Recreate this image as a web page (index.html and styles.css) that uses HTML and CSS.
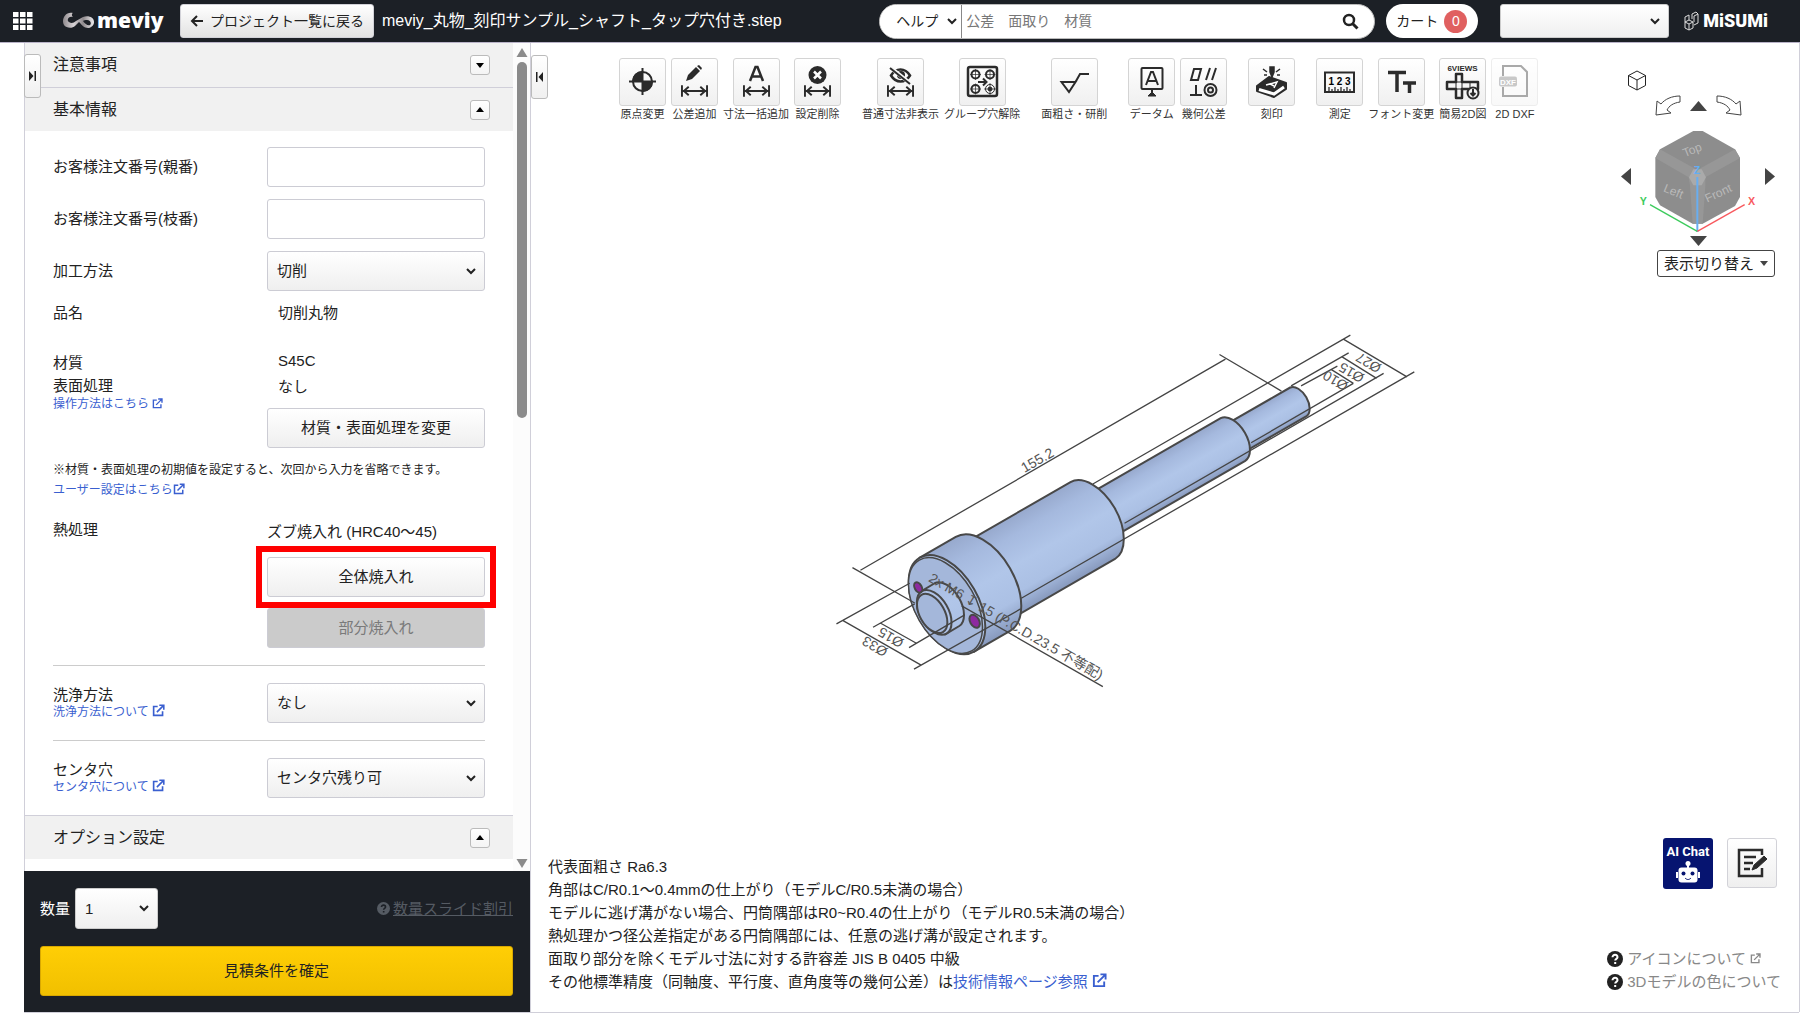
FILE: index.html
```html
<!DOCTYPE html>
<html lang="ja">
<head>
<meta charset="utf-8">
<title>meviy</title>
<link rel="stylesheet" href="styles.css">
</head>
<body>
<svg class="defs" aria-hidden="true">
  <linearGradient id="metal"><stop offset="0" stop-color="#8f8a8d"/><stop offset=".35" stop-color="#d8d3d6"/><stop offset=".65" stop-color="#8f8a8d"/><stop offset="1" stop-color="#f0eef0"/></linearGradient>
  <symbol id="ext" viewBox="0 0 16 16"><path d="M7 3H2v11h11V9M6 10l8-8M9 1.500h5.500V7" fill="none" stroke="currentColor" stroke-width="2"/></symbol>
  <symbol id="help" viewBox="0 0 16 16"><circle cx="8" cy="8" r="8" fill="currentColor"/><path d="M5.500 6.300c0-3.300 5-3.200 5 0 0 1.600-2.300 1.600-2.300 3.200M8.200 11v2" fill="none" stroke="var(--mark)" stroke-width="2"/></symbol>
  <symbol id="span" viewBox="0 0 28 12"><path d="M1 0v12M27 0v12M2 6h24M8 1.500 3 6l5 4.500M20 1.500 25 6l-5 4.500" fill="none" stroke="currentColor" stroke-width="2"/></symbol>
</svg>

<header class="topbar">
  <button class="apps" aria-label="メニュー"><svg width="20" height="18" viewBox="0 0 20 18"><path d="M0 0h5.500v5H0zM7 0h5.500v5H7zM14 0h5.500v5H14zM0 6.500h5.500v5H0zM7 6.500h5.500v5H7zM14 6.500h5.500v5H14zM0 13h5.500v5H0zM7 13h5.500v5H7zM14 13h5.500v5H14z" fill="#fff"/></svg></button>
  <a class="brand" href="#">
    <svg width="33" height="18" viewBox="0 0 33 18"><path fill="url(#metal)" fill-rule="evenodd" d="M11 1c-2 1-1 3 0 4-4-1-6 2-5 4s5 3 8 0l7-4c5-2 11 0 11 5 0 4-4 6-6 6-4 0-6-3-9-6l-4 4c-3 3-9 2-11-1C-1 8 3-1 11 1zM21 9c2 3 5 5 7 4 2-2 0-5-3-5-2 0-3 0-4 1z"/></svg>
    <span>meviy</span>
  </a>
  <button class="btn back"><svg width="13" height="12" viewBox="0 0 13 12"><path d="M13 6H2M7 1 2 6l5 5" fill="none" stroke="#222" stroke-width="2"/></svg>プロジェクト一覧に戻る</button>
  <h1 class="filename">meviy_丸物_刻印サンプル_シャフト_タップ穴付き.step</h1>
  <form class="search">
    <select class="help-select" aria-label="検索対象"><option>ヘルプ</option></select>
    <input type="text" aria-label="検索" placeholder="公差　面取り　材質">
    <button type="button" aria-label="検索する"><svg width="17" height="17" viewBox="0 0 17 17"><circle cx="7" cy="7" r="5" fill="none" stroke="#222" stroke-width="2.500"/><path d="m10.500 10.500 5 5" stroke="#222" stroke-width="3"/></svg></button>
  </form>
  <button class="cart">カート<span class="badge">0</span></button>
  <select class="account" aria-label="アカウント"><option></option></select>
  <a class="misumi" href="#"><svg width="15" height="20" viewBox="0 0 15 20" fill="none" stroke="#ddd"><path d="M1 6 5 4v5l-4 2zM5 9l4 2v6l-4 2-4-2v-6M5 13v6M5 13l4-2M5 13l-4-2M8 3l4-2 2 2v9l-4 2M10 5v6M10 5l4-2M8 3v5"/></svg><span>MiSUMi</span></a>
</header>

<div class="workspace">
  <aside class="side">
    <button class="collapse" aria-label="パネルを広げる"><svg width="7" height="12" viewBox="0 0 7 12"><path d="M0 1v10l4.500-5zM5.500 1H7v10H5.500z" fill="#222"/></svg></button>
    <div class="scroller">
      <div class="scroll-content">
        <section class="section-head"><h2>注意事項</h2><button class="toggle" aria-label="開く"><svg width="8" height="5" viewBox="0 0 8 5"><path d="M0 0h8L4 5z"/></svg></button></section>
        <section class="section-head ruled"><h2>基本情報</h2><button class="toggle" aria-label="閉じる"><svg width="8" height="5" viewBox="0 0 8 5"><path d="M0 5h8L4 0z"/></svg></button></section>
        <div class="fields">
          <div class="row"><label for="order-main">お客様注文番号(親番)</label><input id="order-main" class="control" type="text"></div>
          <div class="row"><label for="order-sub">お客様注文番号(枝番)</label><input id="order-sub" class="control" type="text"></div>
          <div class="row"><label for="method">加工方法</label><select id="method" class="control"><option>切削</option></select></div>
          <div class="row name-row"><span>品名</span><span class="value">切削丸物</span></div>
          <div class="row top">
            <div class="stack material"><span>材質</span><span>表面処理</span><a href="#">操作方法はこちら <svg width="11" height="11"><use href="#ext"/></svg></a></div>
            <div class="stack values"><span class="value">S45C</span><span class="value">なし</span><button class="btn control">材質・表面処理を変更</button></div>
          </div>
          <p class="note">※材質・表面処理の初期値を設定すると、次回から入力を省略できます。<br><a href="#">ユーザー設定はこちら<svg width="12" height="12"><use href="#ext"/></svg></a></p>
          <div class="row top">
            <span>熱処理</span>
            <div class="stack heat"><span>ズブ焼入れ (HRC40～45)</span><div class="marked"><button class="btn control">全体焼入れ</button></div><button class="control" disabled>部分焼入れ</button></div>
          </div>
          <hr>
          <div class="row"><div class="stack pair"><label for="wash">洗浄方法</label><a href="#">洗浄方法について <svg width="13" height="13"><use href="#ext"/></svg></a></div><select id="wash" class="control"><option>なし</option></select></div>
          <hr>
          <div class="row"><div class="stack pair"><label for="center">センタ穴</label><a href="#">センタ穴について <svg width="13" height="13"><use href="#ext"/></svg></a></div><select id="center" class="control"><option>センタ穴残り可</option></select></div>
        </div>
        <section class="section-head ruled"><h2>オプション設定</h2><button class="toggle" aria-label="閉じる"><svg width="8" height="5" viewBox="0 0 8 5"><path d="M0 5h8L4 0z"/></svg></button></section>
      </div>
      <div class="scrollbar" aria-hidden="true">
        <svg width="12" height="9" viewBox="0 0 12 9"><path d="M6 0l5.500 9H.5z" fill="#8b8b8b"/></svg>
        <div class="track"><div class="thumb"></div></div>
        <svg width="12" height="9" viewBox="0 0 12 9"><path d="M6 9l5.500-9H.5z" fill="#8b8b8b"/></svg>
      </div>
    </div>
    <footer class="order">
      <div class="qty"><label for="qty">数量</label><select id="qty"><option>1</option></select><a class="slide" href="#"><svg width="13" height="13"><use href="#help"/></svg><span>数量スライド割引</span></a></div>
      <button class="confirm">見積条件を確定</button>
    </footer>
  </aside>

  <main class="viewer">
    <svg class="model" viewBox="531 43 1269 969" preserveAspectRatio="xMidYMid meet" role="img" aria-label="シャフト">
      <defs>
        <linearGradient id="shade"><stop offset="0" stop-color="#97a9cd"/><stop offset=".2" stop-color="#a5b9de"/><stop offset=".5" stop-color="#b1c6e9"/><stop offset=".78" stop-color="#abc0e4"/><stop offset="1" stop-color="#8799bd"/></linearGradient>
        <linearGradient id="g33" href="#shade" gradientUnits="userSpaceOnUse" x1="920" y1="557.700" x2="974.500" y2="651.700"/>
        <linearGradient id="g27" href="#shade" gradientUnits="userSpaceOnUse" x1="961" y1="545.400" x2="1005.600" y2="622.400"/>
        <linearGradient id="g15" href="#shade" gradientUnits="userSpaceOnUse" x1="1080.700" y1="499.100" x2="1105.300" y2="541.900"/>
        <linearGradient id="g10" href="#shade" gradientUnits="userSpaceOnUse" x1="1225.300" y1="425.100" x2="1241.700" y2="453.700"/>
      </defs>
      <g stroke="#484848" stroke-width="2">
        <path fill="url(#g10)" d="M1225.300 425.100 1290.800 387.400A16.500 9.500 60 0 1 1307.200 416L1241.700 453.700z"/>
        <path fill="url(#g15)" d="M1080.700 499.100 1221.200 418A24.700 14.300 60 0 1 1245.800 460.800L1105.300 541.900z"/>
        <path fill="url(#g27)" d="M961 545.400 1070.900 482A44.500 25.700 60 0 1 1115.500 559L1005.600 622.400z"/>
        <path fill="url(#g33)" d="M920.100 557.700 956.100 536.900A54.300 31.300 60 0 1 1010.500 630.900L974.500 651.700z"/>
        <ellipse cx="947.300" cy="604.700" rx="54.300" ry="31.300" transform="rotate(60 947.300 604.700)" fill="#b0c4e8"/>
        <ellipse cx="945.800" cy="605.600" rx="52.500" ry="30.200" transform="rotate(60 945.800 605.600)" fill="#a4b7da" stroke-width="1.500"/>
        <path fill="url(#g33)" d="M921 591.600 935 583.300A24.700 14.300 60 0 1 959.600 626.100L945.600 634.400z"/>
        <ellipse cx="934.500" cy="612.500" rx="24.500" ry="14.200" transform="rotate(60 934.500 612.500)" fill="#b0c4e8"/>
        <ellipse cx="932.500" cy="613.500" rx="21.500" ry="12.400" transform="rotate(60 932.500 613.500)" fill="#a4b7da"/>
        <ellipse cx="918.500" cy="587.500" rx="5.500" ry="3.500" transform="rotate(60 918.500 587.500)" fill="#8d2aa0"/>
        <ellipse cx="975" cy="621.300" rx="7" ry="4.500" transform="rotate(60 975 621.300)" fill="#8d2aa0"/>
      </g>
      <path fill="none" stroke="#444" stroke-width="1.300" d="M860.700 570.300 1226 359M852.700 567.700 915 603M1220 354.300 1282 391M843.300 620.700 921 665M836.700 624 910 583.300M914.300 669.300 1021 609M881 623.300 916.700 643.300M873.300 627.300 915 604M909.300 647.700 965 615M1344 339 1407.700 376.700M1351 335 1093.300 484M1415 371.700 1021.700 598.300M1342.700 356.700 1377.300 378.300M1349.300 352.700 1291.700 385.700M1384.300 373.300 1125 523.300M1331.700 369.300 1354 383.300M1338 366 1301.700 385.700M1354 383.300 1251.700 442.700M962 606 1103.300 686.700"/>
      <g class="dims">
        <text transform="translate(1025 473) rotate(-30)">155.2</text>
        <text transform="translate(928 581) rotate(30)">2x M6 ↧ 15 (P.C.D.23.5 不等配)</text>
        <text transform="translate(889 649) rotate(210)">Ø33</text>
        <text transform="translate(905 640) rotate(210)">Ø15</text>
        <text transform="translate(1383 365) rotate(210)">Ø27</text>
        <text transform="translate(1366 375) rotate(210)">Ø15</text>
        <text transform="translate(1350 383) rotate(210)">Ø10</text>
      </g>
    </svg>

    <button class="collapse" aria-label="パネルを閉じる"><svg width="7" height="12" viewBox="0 0 7 12"><path d="M7 1v10L2.500 6zM0 1h1.500v10H0z" fill="#222"/></svg></button>

    <nav class="toolbar">
      <div class="group">
        <button class="tool"><span class="face"><svg viewBox="1 1 45 45"><circle cx="23.500" cy="23.500" r="9.500" fill="none" stroke="#2b2b2b" stroke-width="2"/><path d="M23.500 23.500V13A10.500 10.500 0 0 0 13 23.500zM23.500 23.500V34A10.500 10.500 0 0 0 34 23.500z" fill="#2b2b2b"/><path d="M23.500 10v27M10 23.500h27" stroke="#2b2b2b" stroke-width="2"/></svg></span>原点変更</button>
        <button class="tool"><span class="face"><svg viewBox="1 1 45 45"><path d="m15 23 2-6 8-8 4 4-8 8zM26 8l2-1 3 3-1 2z" fill="#2b2b2b"/><use href="#span" x="10" y="27" width="27" height="12"/></svg></span>公差追加</button>
        <button class="tool"><span class="face"><svg viewBox="1 1 45 45"><path d="m17 23 5.500-14h2L30 23M19 18.500h9" fill="none" stroke="#2b2b2b" stroke-width="2.500"/><use href="#span" x="10" y="27" width="27" height="12"/></svg></span>寸法一括追加</button>
        <button class="tool"><span class="face"><svg viewBox="1 1 45 45"><circle cx="23.500" cy="17" r="9" fill="#2b2b2b"/><path d="m20 13.500 7 7m0-7-7 7" stroke="#fff" stroke-width="2.500"/><use href="#span" x="10" y="27" width="27" height="12"/></svg></span>設定削除</button>
      </div>
      <div class="group">
        <button class="tool"><span class="face"><svg viewBox="1 1 45 45"><path d="M14 17.500c5-8 14-8 19 0-5 8-14 8-19 0z" fill="none" stroke="#2b2b2b" stroke-width="2.500"/><circle cx="24" cy="17" r="4" fill="#2b2b2b"/><path d="m14 10 20 16" stroke="#f7f7f7" stroke-width="4"/><path d="m13 10 20 16" stroke="#2b2b2b" stroke-width="2"/><use href="#span" x="10" y="27" width="27" height="12"/></svg></span>普通寸法非表示</button>
        <button class="tool"><span class="face"><svg viewBox="1 1 45 45" fill="none" stroke="#2b2b2b"><rect x="9" y="9" width="29" height="29" rx="2" stroke-width="2.500"/><g stroke-width="2"><circle cx="16.500" cy="16.500" r="4"/><circle cx="31" cy="16.500" r="4"/><circle cx="16.500" cy="31" r="4"/><circle cx="31" cy="31" r="4.500" stroke-width="1"/><path d="M19 24h8M24 20.500l3.500 3.500-3.500 3.500"/></g><path d="M16.500 11v11M11 16.500h11M31 11v11M25.500 16.500h11M16.500 25.500v11M11 31h11M31 25v12M25 31h12" stroke-width=".7"/><circle cx="31" cy="31" r="2" fill="#2b2b2b"/></svg></span>グループ穴解除</button>
      </div>
      <div class="group">
        <button class="tool"><span class="face"><svg viewBox="1 1 45 45"><path d="M10.500 24h14L18 34zM24.500 24 29 16h9" fill="none" stroke="#2b2b2b" stroke-width="2"/></svg></span>面粗さ・研削</button>
      </div>
      <div class="group">
        <button class="tool"><span class="face"><svg viewBox="1 1 45 45" fill="none" stroke="#2b2b2b" stroke-width="2"><rect x="13.500" y="10" width="21" height="21" rx="1"/><path d="m18 27 5-13h2l5 13M20 23h8M24 31v5"/><path d="m24 34-4 4h8z" fill="#2b2b2b" stroke-width="1"/></svg></span>データム</button>
        <button class="tool"><span class="face"><svg viewBox="1 1 45 45" fill="none" stroke="#2b2b2b" stroke-width="2"><path d="m14 11-3 11h7l3-11zM30 10l-4 12M36 10l-4 12M16 27v10M10 37h12"/><circle cx="30.500" cy="32" r="6"/><circle cx="30.500" cy="32" r="2.500"/></svg></span>幾何公差</button>
      </div>
      <div class="group">
        <button class="tool"><span class="face"><svg viewBox="1 1 45 45"><path d="m9 28 12-9 17 6v6L26 39 9 33z" fill="#2b2b2b" stroke="#2b2b2b" stroke-width="2" stroke-linejoin="round"/><path d="m11 31.500 15 4.500 10-7" fill="none" stroke="#fff" stroke-width="3"/><path d="m18 27 11-3-3 6M22 26l4 2" fill="none" stroke="#fff" stroke-width="1.500"/><path d="M22 9h4v5l-2 5-2-5zM15 11l4 3M16 17h3M32 11l-4 3M32 17h-3" stroke="#2b2b2b" stroke-width="1.500" fill="#2b2b2b"/></svg></span>刻印</button>
      </div>
      <div class="group">
        <button class="tool"><span class="face"><svg viewBox="1 1 45 45"><rect x="9" y="14.500" width="29" height="19.500" fill="none" stroke="#2b2b2b" stroke-width="2"/><path d="M13 34v-5M16 34v-3M19 34v-5M22 34v-3M25 34v-5M28 34v-3M31 34v-5M34 34v-3" stroke="#2b2b2b" stroke-width="1.300"/><text x="23.500" y="26.500" font-size="10" font-weight="700" text-anchor="middle">1 2 3</text></svg></span>測定</button>
        <button class="tool"><span class="face"><svg viewBox="1 1 45 45"><path d="M10 14.500h18M19 14v20M25 25h13M31.500 25v10" fill="none" stroke="#2b2b2b" stroke-width="3.500"/></svg></span>フォント変更</button>
        <button class="tool"><span class="face"><svg viewBox="1 1 45 45" fill="none" stroke="#2b2b2b" stroke-width="2"><text x="23.500" y="13" font-size="8" font-weight="700" text-anchor="middle" stroke="none" fill="#2b2b2b">6VIEWS</text><path d="M17 16h6v8h16v7H23v9h-6v-9H8v-7h9z" stroke-width="2.500" stroke-linejoin="round"/><path d="M17 24h6v7h-6zM31 24v7" stroke-width="1"/><circle cx="34" cy="35" r="5.500" fill="#f5f5f5"/><path d="M34 31v6M31.500 35l2.500 2.500 2.500-2.500"/></svg></span>簡易2D図</button>
        <button class="tool" disabled><span class="face"><svg viewBox="1 1 45 45" fill="none" stroke="#2b2b2b" stroke-width="2"><path d="M12 18V8h18l6 6v24H12v-9"/><rect x="8" y="18.500" width="18" height="10" rx="2" fill="#777" stroke="none"/><text x="17" y="26.500" font-size="8" font-weight="700" text-anchor="middle" stroke="none" fill="#fff">DXF</text></svg></span>2D DXF</button>
      </div>
    </nav>

    <div class="navigator">
      <button class="home" aria-label="ホーム"><svg width="20" height="21" viewBox="0 0 20 21" fill="none" stroke="#222"><path d="m10 1 8.500 4.500v10L10 20l-8.500-4.500v-10zM1.500 5.500 10 10l8.500-4.500M10 10v10"/></svg></button>
      <div class="spin">
        <button aria-label="左回転"><svg width="26" height="21" viewBox="0 0 26 21" fill="none" stroke="#444"><path d="M25 1v6c-7 1-11 4-13 8l4 3-15 2L2 6l4 3c4-5 11-8 19-8z"/></svg></button>
        <button aria-label="上"><svg width="17" height="10" viewBox="0 0 17 10"><path d="M0 10 8.500 0 17 10z" fill="#444"/></svg></button>
        <button aria-label="右回転"><svg width="26" height="21" viewBox="0 0 26 21" fill="none" stroke="#444"><path d="M1 1v6c7 1 11 4 13 8l-4 3 15 2L24 6l-4 3C16 4 9 1 1 1z"/></svg></button>
      </div>
      <div class="turn">
        <button aria-label="左"><svg width="10" height="17" viewBox="0 0 10 17"><path d="M10 0v17L0 8.500z" fill="#444"/></svg></button>
        <svg width="128" height="112" viewBox="162 204 384 336" role="img" aria-label="ビューキューブ">
          <path d="M340 237h28l97 55 15 26v117l-15 27-97 53h-30l-98-55-14-25V318l14-26z" fill="#8d8d8d"/>
          <path d="m240 292 112 62 113-62 15 26-104 58v26l-8 113h-30l-8-113-4-26-100-58z" fill="#979797"/>
          <path d="m340 352h25l13 24-13 24h-25l-13-24z" fill="#aaa"/>
          <g class="cube-text"><text transform="translate(314 316) rotate(-22)">Top</text><text transform="translate(248 418) rotate(22)">Left</text><text transform="translate(382 452) rotate(-25)">Front</text></g>
          <g fill="none" stroke-width="4"><path d="M352 540V375" stroke="#69aef0" stroke-width="6"/><path d="M352 538 210 458" stroke="#3ccb5c"/><path d="m352 538 142-80" stroke="#f8595e"/></g>
          <g class="axis"><text x="341" y="366" fill="#62aef4">Z</text><text x="179" y="458" fill="#3ccb5c">Y</text><text x="504" y="458" fill="#f8595e">X</text></g>
        </svg>
        <button aria-label="右"><svg width="10" height="17" viewBox="0 0 10 17"><path d="M0 0v17l10-8.500z" fill="#444"/></svg></button>
      </div>
      <button class="down" aria-label="下"><svg width="17" height="10" viewBox="0 0 17 10"><path d="M0 0h17L8.500 10z" fill="#444"/></svg></button>
      <button class="display">表示切り替え<svg width="8" height="5" viewBox="0 0 8 5"><path d="M0 0h8L4 5z" fill="#444"/></svg></button>
    </div>

    <div class="bottom">
      <p class="notes">代表面粗さ Ra6.3<br>角部はC/R0.1～0.4mmの仕上がり（モデルC/R0.5未満の場合）<br>モデルに逃げ溝がない場合、円筒隅部はR0~R0.4の仕上がり（モデルR0.5未満の場合）<br>熱処理かつ径公差指定がある円筒隅部には、任意の逃げ溝が設定されます。<br>面取り部分を除くモデル寸法に対する許容差 JIS B 0405 中級<br>その他標準精度（同軸度、平行度、直角度等の幾何公差）は<a href="#">技術情報ページ参照 <svg width="15" height="15"><use href="#ext"/></svg></a></p>
      <div class="support">
        <div class="actions">
          <button class="chat"><span>AI Chat</span><svg width="24" height="23" viewBox="0 0 24 23"><circle cx="12" cy="2.500" r="2.500" fill="#fff"/><path d="M12 4v4M1 11v6M23 11v6" stroke="#fff" stroke-width="2"/><rect x="2.500" y="6.500" width="19" height="15" rx="3" fill="#fff"/><circle cx="7.500" cy="12.500" r="2" fill="#061470"/><circle cx="16.500" cy="12.500" r="2" fill="#061470"/><path d="M9 17c2 2 4 2 6 0" fill="none" stroke="#061470"/></svg></button>
          <button class="btn edit" aria-label="メモ"><svg width="30" height="30" viewBox="0 0 30 30" fill="none" stroke="#2b2b2b" stroke-width="2.500"><path d="M25 7V2H2v26h23v-8M7 9h12M7 15h9M7 21h6"/><path d="m15 22 2-5 10-9 3 3-10 9z" fill="#2b2b2b" stroke-width="1"/></svg></button>
        </div>
        <ul class="links">
          <li><svg width="16" height="16"><use href="#help"/></svg><a href="#">アイコンについて <svg width="11" height="11"><use href="#ext"/></svg></a></li>
          <li><svg width="16" height="16"><use href="#help"/></svg><a href="#">3Dモデルの色について</a></li>
        </ul>
      </div>
    </div>
  </main>
</div>
</body>
</html>
```
FILE: styles.css
```css
:root { --dark: #1c2026; --line: #d0cfd9; --link: #3a5fd0; --mark: #fff; }
* { box-sizing: border-box; }
body { margin: 0; height: 100vh; display: flex; flex-direction: column; background: #fff; color: #222; font: 15px/20px "Liberation Sans", "Noto Sans CJK JP", sans-serif; }
button, select, input { font: inherit; color: inherit; margin: 0; }
button { padding: 0; border: 0; background: none; }
h1, h2, p, ul { margin: 0; padding: 0; font-weight: 400; }
svg { display: block; flex: none; }
a { color: var(--link); text-decoration: none; }
a svg { display: inline-block; vertical-align: -1px; }
.defs { position: absolute; width: 0; height: 0; }
select { appearance: none; background: url("data:image/svg+xml,%3Csvg xmlns='http://www.w3.org/2000/svg' width='10' height='7'%3E%3Cpath d='M1 1l4 4 4-4' fill='none' stroke='%23222' stroke-width='2'/%3E%3C/svg%3E") no-repeat right 8px center, linear-gradient(#fff, #efefef); }
.btn { border: 1px solid #d2d2d8; border-radius: 3px; background: linear-gradient(#fff, #efefef); }

.topbar { flex: none; height: 43px; display: flex; align-items: center; padding: 0 32px 0 13px; background: var(--dark); border-bottom: 1px solid #b9b3c8; color: #fff; }
.brand { display: flex; align-items: center; gap: 2px; margin-left: 29px; width: 118px; color: #fff; font: 800 21px/30px "Open Sans", sans-serif; }
.brand span { padding-bottom: 3px; }
.back { display: flex; align-items: center; gap: 7px; height: 34px; padding: 0 9px; color: #222; font-size: 14px; background: linear-gradient(#fff, #e2e2e2); }
.filename { margin-left: 8px; font-size: 16px; white-space: nowrap; flex: 1; }
.search { display: flex; align-items: center; width: 496px; height: 35px; border-radius: 18px; background: #fff; border: 1px solid #bbb; color: #222; font-size: 14px; overflow: hidden; }
.help-select { align-self: stretch; width: 82px; padding: 0 0 0 16px; border: 0; border-right: 1px solid #888; background-color: #fff; background-position: right 4px center, 0 0; background-size: auto, 0 0; }
.search input { flex: 1; min-width: 0; border: 0; padding: 0 4px; background: none; }
.search input::placeholder { color: #777; opacity: 1; }
.search button { padding-right: 15px; }
.cart { display: flex; align-items: center; gap: 6px; width: 92px; height: 34px; margin-left: 11px; padding-left: 10px; border-radius: 17px; background: #fff; color: #222; font-size: 14px; white-space: nowrap; }
.badge { width: 23px; height: 23px; border-radius: 50%; background: #e06060; color: #fff; line-height: 23px; }
.account { width: 169px; height: 34px; margin-left: 22px; border: 1px solid #ccc; border-radius: 3px; background-color: #eee; }
.misumi { display: flex; align-items: center; gap: 4px; margin-left: 15px; color: #fff; font: 900 18px/20px Roboto, sans-serif; }

.workspace { flex: 1; min-height: 0; display: flex; margin: 0 1px 1px 24px; box-shadow: 0 1px var(--line), 1px 0 var(--line); }
.side { position: relative; flex: none; width: 507px; display: flex; flex-direction: column; border-right: 1px solid var(--line); border-left: 1px solid var(--line); }
.collapse { position: absolute; left: 0; top: 11px; width: 17px; height: 44px; border: 1px solid #bbb; border-radius: 3px; background: linear-gradient(#fff, #f0f0f0); display: grid; place-items: center; z-index: 1; }
.side .collapse { left: -1px; }
.scroller { flex: 1; min-height: 0; display: flex; }
.scroll-content { flex: 1; overflow: hidden; }
.section-head { display: flex; align-items: center; justify-content: space-between; height: 44px; padding: 0 23px 0 28px; background: #f1f1f1; }
.ruled { border-top: 1px solid var(--line); }
h2 { font-size: 16px; }
.toggle { width: 20px; height: 20px; border: 1px solid #bbb; border-radius: 3px; background: linear-gradient(#fff, #f4f4f4); display: grid; place-items: center; }
.fields { padding: 16px 28px 5px; display: flex; flex-direction: column; }
.row { display: grid; grid-template-columns: 214px 218px; align-items: center; margin-bottom: 12px; }
.row.top { align-items: start; }
.control { width: 100%; height: 40px; border: 1px solid #ccccd4; border-radius: 3px; padding: 0 9px; }
.control:disabled { background: #cbcbcb; color: #7a7a7a; }
.value { padding-left: 11px; }
.name-row { margin: 0 0 28px; }
.stack { display: flex; flex-direction: column; }
.stack a, .note { font-size: 12px; line-height: 20px; }
.material span { line-height: 23px; }
.material a { line-height: 14px; }
.values { gap: 6px; }
.values .control { margin-top: 5px; }
.note { margin: 0 0 20px; white-space: nowrap; }
.heat { padding-top: 2px; }
.marked { margin: 4px -11px 0; border: 6px solid #f00; padding: 5px; }
.pair label { line-height: 18px; }
.pair a { line-height: 16px; }
hr { width: 100%; margin: 5px 0 17px; border: 0; border-top: 1px solid #ccc; }
.scrollbar { width: 17px; display: flex; flex-direction: column; align-items: center; gap: 5px; padding: 5px 0 3px; background: #fcfcfc; }
.track { flex: 1; width: 10px; }
.thumb { height: 45%; background: #8b8b8b; border-radius: 5px; }
.order { flex: none; height: 141px; margin-left: -1px; padding: 17px 17px 16px 16px; background: var(--dark); color: #fff; display: flex; flex-direction: column; justify-content: space-between; }
.qty { display: flex; align-items: center; gap: 5px; }
.qty select { width: 83px; height: 41px; border: 1px solid #ccc; border-radius: 3px; padding: 0 9px; color: #222; }
.slide { --mark: var(--dark); display: flex; align-items: center; gap: 3px; margin-left: auto; color: #555b63; }
.slide span { text-decoration: underline; }
.confirm { height: 50px; border: 1px solid #d9a800; border-radius: 3px; background: linear-gradient(#ffce05, #f1c000); color: #222; }

.viewer { position: relative; flex: 1; min-width: 0; display: flex; flex-direction: column; justify-content: space-between; }
.model { position: absolute; inset: 0; width: 100%; height: 100%; }
.dims { font: 14px "Liberation Sans", "Noto Sans CJK JP", "DejaVu Sans", sans-serif; fill: #555; }
.viewer .collapse { top: 12px; }
.toolbar { position: relative; display: flex; gap: 21px; padding: 15px 0 0 88px; }
.group { display: flex; gap: 5px; }
.tool { display: flex; flex-direction: column; align-items: center; min-width: 47px; font-size: 11px; line-height: 16px; white-space: nowrap; color: #333; }
.face { width: 47px; height: 48px; border: 1px solid #d4d4d4; border-radius: 3px; background: linear-gradient(#fff, #f0f0f0); color: #2b2b2b; }
.face text { font-family: "Liberation Sans", sans-serif; }
.tool:disabled .face { opacity: .4; }
.navigator { position: absolute; right: 24px; top: 27px; width: 154px; display: flex; flex-direction: column; align-items: center; gap: 4px; }
.home { align-self: flex-start; margin-left: 6px; }
.spin { display: flex; align-items: center; gap: 9px; }
.turn { display: flex; align-items: center; gap: 3px; }
.cube-text { font: 36px "Liberation Sans", sans-serif; fill: #b9b9b9; }
.axis { font: 700 32px "Liberation Sans", sans-serif; }
.display { align-self: flex-end; display: flex; align-items: center; gap: 6px; height: 27px; padding: 0 6px; border: 1px solid #444; border-radius: 3px; background: #fff; font-size: 15px; white-space: nowrap; }
.bottom { position: relative; display: flex; justify-content: space-between; align-items: flex-end; padding: 0 18px 19px 17px; }
.notes { line-height: 23px; white-space: nowrap; }
.support { display: flex; flex-direction: column; align-items: flex-start; gap: 58px; }
.actions { align-self: flex-end; display: flex; gap: 14px; padding-right: 4px; }
.chat { width: 50px; height: 51px; border-radius: 3px; background: #061470; color: #fff; font: 700 13px/18px Roboto, sans-serif; display: flex; flex-direction: column; align-items: center; justify-content: center; white-space: nowrap; }
.edit { width: 50px; height: 50px; display: grid; place-items: center; }
.links { list-style: none; line-height: 23px; }
.links li { display: flex; align-items: center; gap: 4px; white-space: nowrap; }
.links a { color: #888; }
.links a svg { vertical-align: 0; }
```
